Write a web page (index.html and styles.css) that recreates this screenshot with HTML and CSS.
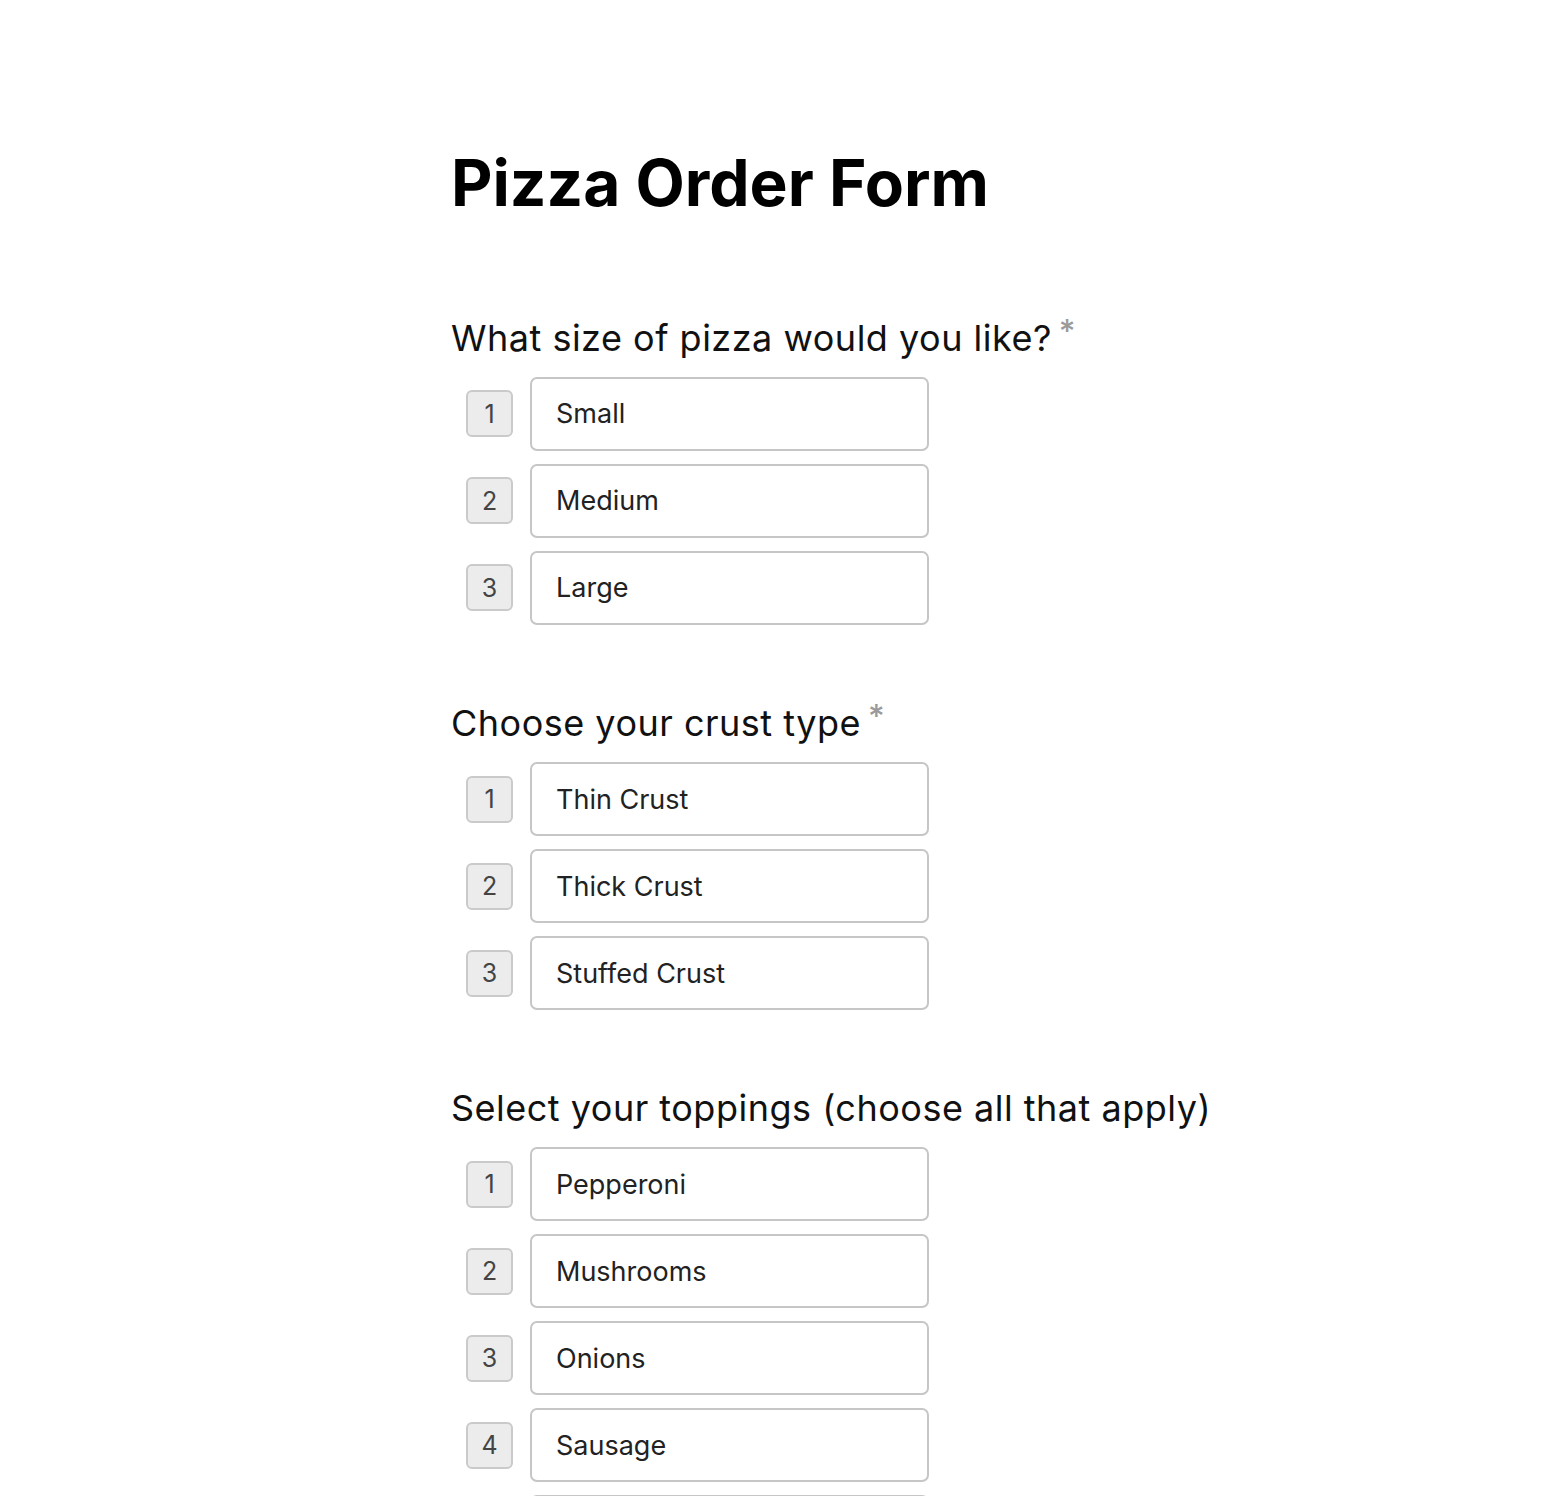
FILE: index.html
```html
<!DOCTYPE html>
<html>
<head>
  <meta charset=utf-8>
  <meta name="viewport" content="width=device-width, initial-scale=1">
  <title>Pizza Order Form</title>
<link rel="stylesheet" href="styles.css">
</head>
<body>

<div class=page>
  <h1>Pizza Order Form</h1>

  <div class=question>
    <h2>What size of pizza would you like?<span class=req>*</span></h2>
    <div class=choices>
      <div class=choice><span class=key>1</span><div class=option>Small</div></div>
      <div class=choice><span class=key>2</span><div class=option>Medium</div></div>
      <div class=choice><span class=key>3</span><div class=option>Large</div></div>
    </div>
  </div>

  <div class=question>
    <h2>Choose your crust type<span class=req>*</span></h2>
    <div class=choices>
      <div class=choice><span class=key>1</span><div class=option>Thin Crust</div></div>
      <div class=choice><span class=key>2</span><div class=option>Thick Crust</div></div>
      <div class=choice><span class=key>3</span><div class=option>Stuffed Crust</div></div>
    </div>
  </div>

  <div class=question>
    <h2>Select your toppings (choose all that apply)</h2>
    <div class=choices>
      <div class=choice><span class=key>1</span><div class=option>Pepperoni</div></div>
      <div class=choice><span class=key>2</span><div class=option>Mushrooms</div></div>
      <div class=choice><span class=key>3</span><div class=option>Onions</div></div>
      <div class=choice><span class=key>4</span><div class=option>Sausage</div></div>
      <div class=choice><span class=key>5</span><div class=option>Extra Cheese</div></div>
    </div>
  </div>
</div>

</body>
</html>
```

FILE: styles.css
```css
* {
  box-sizing: border-box;
  }
body {
  margin: 0;
  background: #fff;
  color: #000;
  font-family: Inter, "Noto Sans", sans-serif;
  }
.page {
  width: 640px;
  margin: 0 auto;
  padding: 145px 0 40px;
  display: flex;
  flex-direction: column;
  gap: 95px;
  }
h1 {
  margin: 0;
  font-size: 64px;
  font-weight: 700;
  line-height: 1.2;
  }
.question {
  display: flex;
  flex-direction: column;
  gap: 17px;
  margin-bottom: -18px;
  }
h2 {
  margin: 0;
  font-size: 36px;
  font-weight: 400;
  line-height: 1.2;
  letter-spacing: 0.5px;
  color: #111;
  white-space: nowrap;
  }
.req {
  color: #9a9a9a;
  font-size: 32px;
  font-weight: 500;
  line-height: 0;
  letter-spacing: 0;
  vertical-align: 8px;
  margin-left: 7px;
  }
.choices {
  display: flex;
  flex-direction: column;
  gap: 13px;
  }
.choice {
  display: flex;
  align-items: center;
  gap: 17px;
  padding-left: 15px;
  }
.key {
  width: 47px;
  height: 47px;
  display: flex;
  align-items: center;
  justify-content: center;
  background: #ececec;
  border: 2px solid #cacaca;
  border-radius: 6px;
  font-size: 25px;
  color: #444;
  }
.option {
  width: 399px;
  height: 74px;
  display: flex;
  align-items: center;
  padding: 0 24px;
  border: 2px solid #c6c6c6;
  border-radius: 7px;
  font-size: 27px;
  color: #222;
  }
```
